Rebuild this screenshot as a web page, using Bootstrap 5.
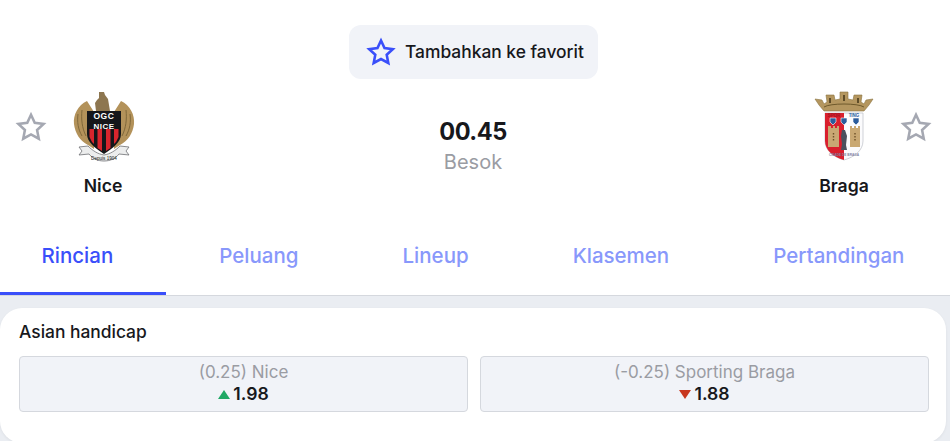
<!DOCTYPE html>
<html lang="id">
<head>
<meta charset="utf-8">
<title>Nice vs Braga</title>
<link href="https://cdn.jsdelivr.net/npm/bootstrap@5.3.0/dist/css/bootstrap.min.css" rel="stylesheet">
<style>
html,body{height:441px;overflow:hidden}
body{background:#eaedf2;font-family:Inter,"Liberation Sans",sans-serif;color:#17181c}
.top-area{background:#fff;border-bottom:1px solid #d5d8de;height:296px}
.fav-row{padding-top:25px;height:79px}
.fav-pill{background:#f1f3f8;border-radius:12px;height:54px;width:249px;font-size:17.4px;font-weight:500;gap:9px;padding-left:17px;margin-right:3px;white-space:nowrap}
.match-row{height:141px}
.side{width:230px}
.side-star{margin-top:32px}
.crest-col{width:80px;margin-top:9px}
.crest-col svg{display:block;margin:0 auto}
.team-name{font-size:17.6px;font-weight:600;margin-top:9px;line-height:22px}
.mid{margin-top:38px;margin-right:4px}
.kick{font-size:23.6px;font-weight:700;line-height:30px;letter-spacing:-.5px}
.day{font-size:20px;color:#9a9ca3;line-height:26px;margin-top:2px}
.tabs-row{flex-wrap:nowrap}
.tabs-row .nav-link{font-size:20.5px;color:#8898fb;padding:0 52px;height:75px;line-height:72px;border-bottom:3px solid transparent;border-radius:0;font-weight:500;white-space:nowrap}
.tabs-row .nav-link.active{color:#3a4ffa;border-bottom-color:#3a4ffa;padding:0 53px 0 41.5px}
.tabs-row .nav-item:nth-child(2) .nav-link{padding-left:53px}
.odds-card{background:#fff;border-radius:22px;margin:12px 4px 0 0;padding:13px 17px 0 19px;box-shadow:0 1px 3px rgba(0,0,0,.06);height:135px}
.odds-title{font-size:17.4px;font-weight:500;line-height:22px;margin-bottom:13px}
.odd-box{background:#f1f3f8;border:1px solid #d5d8de;border-radius:4px;height:56px;text-align:center;flex:1 1 0}
.odd-line{font-size:17px;color:#9a9ca3;line-height:22px;padding-top:4px}
.odd-val{font-size:17.6px;font-weight:600;line-height:22px;gap:3px}
.odd-gap{gap:12px}
</style>
</head>
<body>
<div class="top-area">
  <div class="fav-row d-flex justify-content-center">
    <div class="fav-pill d-flex align-items-center">
      <svg width="30" height="30" viewBox="0 0 30 30"><path d="M15 3.5l3.5 7.6 8.3 1-6.1 5.7 1.6 8.2L15 22l-7.3 4 1.6-8.2-6.1-5.7 8.3-1z" fill="none" stroke="#3a4ffa" stroke-width="2.6"/></svg>
      <span>Tambahkan ke favorit</span>
    </div>
  </div>
  <div class="match-row d-flex justify-content-between">
    <div class="side d-flex">
      <svg class="side-star" style="margin-left:15px" width="32" height="32" viewBox="0 0 30 30"><path d="M15 3.5l3.5 7.6 8.3 1-6.1 5.7 1.6 8.2L15 22l-7.3 4 1.6-8.2-6.1-5.7 8.3-1z" fill="none" stroke="#a5a8b2" stroke-width="2.4"/></svg>
      <div class="crest-col text-center" style="margin-left:16px">
        <svg width="68" height="78" viewBox="0 0 68 78">
          <path d="M18 13C9 17 4 27 5 36c1 9 6 17 14 21l6 4V24z" fill="#b3925a"/>
          <path d="M52 13c9 4 14 14 13 23-1 9-6 17-14 21l-6 4V24z" fill="#b3925a"/>
          <path d="M9 26c-1 8 0 15 4 22M13 22c-1 9 0 18 4 26M61 26c1 8 0 15-4 22M57 22c1 9 0 18-4 26" stroke="#80683a" fill="none" stroke-width="1"/>
          <path d="M30 4h5l1 3 3 4 2 12H27l-1-8 2-3 2-2z" fill="#8d7650"/>
          <path d="M18 23h34v23c0 8-8 14-17 20-9-6-17-12-17-20z" fill="#15161a"/>
          <path d="M20.500 41h4.500v15l-2-2-2.500-5zM28.500 41h4.500v22l-4.500-3zM37 41h4.500v19l-4.500 3zM45 41h4.500v8l-2.500 5-2 2z" fill="#d9252d"/>
          <text x="35" y="31" font-size="8.500" font-weight="700" letter-spacing=".6" fill="#fff" text-anchor="middle" font-family="Liberation Sans">OGC</text>
          <text x="35" y="40.500" font-size="8" font-weight="700" letter-spacing=".5" fill="#fff" text-anchor="middle" font-family="Liberation Sans">NICE</text>
          <path d="M10 59l9-1c5 5 10 8 16 9 6-1 11-4 16-9l9 1-3 4 3 4-10-1c-4 5-9 7-15 7s-11-2-15-7l-10 1 3-4z" fill="#eceded" stroke="#6f7074" stroke-width=".8"/>
          <text x="35" y="72" font-size="4.600" fill="#222" text-anchor="middle" font-family="Liberation Sans">Depuis 1904</text>
        </svg>
        <div class="team-name">Nice</div>
      </div>
    </div>
    <div class="mid text-center">
      <div class="kick">00.45</div>
      <div class="day">Besok</div>
    </div>
    <div class="side d-flex justify-content-end">
      <div class="crest-col text-center" style="margin-right:16px">
        <svg width="68" height="78" viewBox="0 0 68 78">
          <path d="M5 11l7 1 2 4 3-2-1-7h8l1 5 5-1V4h8v7l5 1 1-5h8l-1 7 3 2 2-4 7-1-4 6-5 6H14l-5-6z" fill="#b4965f" stroke="#8a7340" stroke-width=".6"/>
          <path d="M14 19c6-4 34-4 40 0" fill="none" stroke="#6f5a2c" stroke-width="1"/>
          <path d="M20 10v5M34 7v6M48 10v5" stroke="#5e4c28" stroke-width="2"/>
          <path d="M15 25h38v28c0 9-8 16-19 19-11-3-19-10-19-19z" fill="#fbfbfd" stroke="#c4c6cd" stroke-width=".8"/>
          <path d="M15 25h19v47c-11-3-19-10-19-19z" fill="#d91f2d"/>
          <text x="24" y="29" font-size="4.500" font-weight="700" fill="#a11822" text-anchor="middle" font-family="Liberation Sans">SPOR</text>
          <text x="44" y="29" font-size="4.500" font-weight="700" fill="#2b5c9c" text-anchor="middle" font-family="Liberation Sans">TING</text>
          <g fill="#2b5c9c" stroke="#fff" stroke-width=".6"><path d="M20 30h6v4l-3 3-3-3z"/><path d="M31 30h6v4l-3 3-3-3z"/><path d="M43 30h6v4l-3 3-3-3z"/></g>
          <g fill="#c9a873"><path d="M18 38h3v2h2v-2h2v2h2v-2h2v21H18z"/><path d="M40 38h2v2h2v-2h2v2h2v-2h2v21H40z"/></g>
          <path d="M23.500 45v9M45 45v9" stroke="#6e5228" stroke-width="1.400" stroke-dasharray="1.500 1.500"/>
          <path d="M32 42h3l2 6-1 9 1 5h-6l1-6-1-8z" fill="#4b505e"/>
          <text x="34" y="68" font-size="3.200" font-weight="700" fill="#7d7fa0" text-anchor="middle" font-family="Liberation Sans">CIDADE DE BRAGA</text>
        </svg>
        <div class="team-name">Braga</div>
      </div>
      <svg class="side-star" style="margin-right:18px" width="32" height="32" viewBox="0 0 30 30"><path d="M15 3.5l3.5 7.6 8.3 1-6.1 5.7 1.6 8.2L15 22l-7.3 4 1.6-8.2-6.1-5.7 8.3-1z" fill="none" stroke="#a5a8b2" stroke-width="2.4"/></svg>
    </div>
  </div>
  <ul class="nav tabs-row">
    <li class="nav-item"><a class="nav-link active" href="#">Rincian</a></li>
    <li class="nav-item"><a class="nav-link" href="#">Peluang</a></li>
    <li class="nav-item"><a class="nav-link" href="#">Lineup</a></li>
    <li class="nav-item"><a class="nav-link" href="#">Klasemen</a></li>
    <li class="nav-item"><a class="nav-link" href="#">Pertandingan</a></li>
  </ul>
</div>
<div class="odds-card">
  <div class="odds-title">Asian handicap</div>
  <div class="d-flex odd-gap">
    <div class="odd-box">
      <div class="odd-line">(0.25) Nice</div>
      <div class="odd-val d-flex justify-content-center align-items-center">
        <svg width="12" height="9" viewBox="0 0 12 9"><path d="M6 0l6 9H0z" fill="#1fa865"/></svg><span>1.98</span>
      </div>
    </div>
    <div class="odd-box">
      <div class="odd-line">(-0.25) Sporting Braga</div>
      <div class="odd-val d-flex justify-content-center align-items-center">
        <svg width="12" height="9" viewBox="0 0 12 9"><path d="M0 0h12L6 9z" fill="#c8371f"/></svg><span>1.88</span>
      </div>
    </div>
  </div>
</div>
<script src="https://cdn.jsdelivr.net/npm/bootstrap@5.3.0/dist/js/bootstrap.bundle.min.js"></script>
</body>
</html>
